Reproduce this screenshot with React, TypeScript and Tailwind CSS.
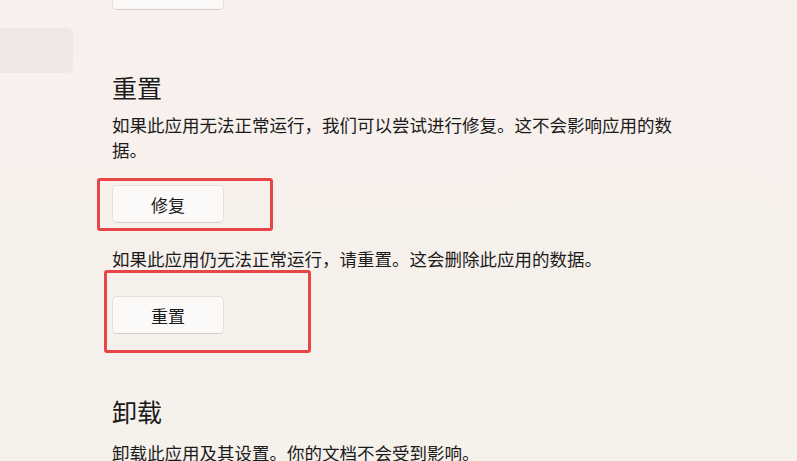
const font = { fontFamily: '"Segoe UI", "Noto Sans CJK SC", "Noto Sans", sans-serif' };

const Btn = ({ label }: { label: string }) => (
  <button className="w-[112px] h-[38px] rounded-[5px] border border-[#e6e0dd] border-b-[#d3cdca] bg-[#fcfaf9] text-[17px] text-[#1b1b1b] leading-none">
    {label}
  </button>
);

const Marked = ({ label, box }: { label: string; box: string }) => (
  <div className="relative w-[112px]">
    <Btn label={label} />
    <div className={"absolute border-[3px] border-[#e84646] rounded-[3px] pointer-events-none " + box} />
  </div>
);

export default function App() {
  return (
    <div
      className="w-[797px] h-[461px] overflow-hidden flex bg-gradient-to-b from-[#f8f0ed] to-[#f5f1eb] text-[#1b1b1b]"
      style={font}
    >
      <aside className="w-[80px] shrink-0">
        <div className="-ml-[8px] mt-[28px] w-[81px] h-[45px] rounded-[6px] bg-[#efe7e4]" />
      </aside>

      <main className="pl-[32px] flex flex-col">
        <div className="-mt-[28px]">
          <Btn label="" />
        </div>

        <h2 className="mt-[57px] text-[25px] leading-[32px] font-normal">重置</h2>
        <p className="mt-[9px] w-[585px] text-[17.5px] leading-[25px]">
          如果此应用无法正常运行，我们可以尝试进行修复。这不会影响应用的数据。
        </p>

        <div className="mt-[23px]">
          <Marked label="修复" box="-left-[15px] -top-[7px] w-[176px] h-[53px]" />
        </div>

        <p className="mt-[23px] text-[17.5px] leading-[25px]">
          如果此应用仍无法正常运行，请重置。这会删除此应用的数据。
        </p>

        <div className="mt-[25px]">
          <Marked label="重置" box="-left-[8px] -top-[26px] w-[207px] h-[83px]" />
        </div>

        <h2 className="mt-[61px] text-[25px] leading-[32px] font-normal">卸载</h2>
        <p className="mt-[13px] text-[17.5px] leading-[25px]">
          卸载此应用及其设置。你的文档不会受到影响。
        </p>
      </main>
    </div>
  );
}
